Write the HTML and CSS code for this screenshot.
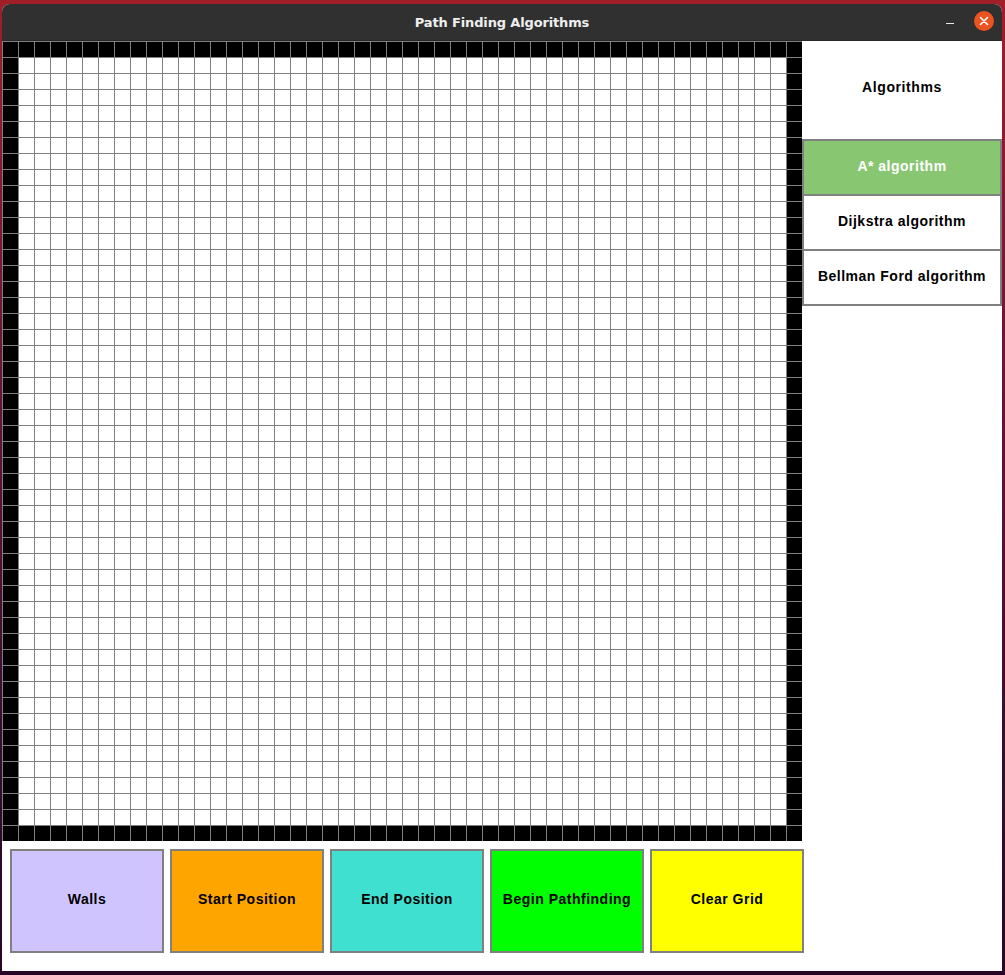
FILE: index.html
```html
<!DOCTYPE html>
<html>
<head>
<meta charset="utf-8">
<title>Path Finding Algorithms</title>
<link rel="stylesheet" href="styles.css">
</head>
<body>
<div class="window">
  <div class="titlebar">
    <span class="title">Path Finding Algorithms</span>
    <div class="controls">
      <span class="minimize"></span>
      <span class="close">
        <svg width="20" height="20" viewBox="0 0 20 20"><circle cx="10" cy="10" r="10" fill="#e95420"/><path d="M6.5 6.5 L13.5 13.5 M13.5 6.5 L6.5 13.5" stroke="#fff" stroke-width="1.6" stroke-linecap="round"/></svg>
      </span>
    </div>
  </div>
  <div class="content">
    <div class="main">
      <div class="board"></div>
      <div class="sidebar">
        <div class="side-label">Algorithms</div>
        <div class="algo algo-active">A* algorithm</div>
        <div class="algo">Dijkstra algorithm</div>
        <div class="algo">Bellman Ford algorithm</div>
      </div>
    </div>
    <div class="toolbar">
      <div class="tool tool-walls">Walls</div>
      <div class="tool tool-start">Start Position</div>
      <div class="tool tool-end">End Position</div>
      <div class="tool tool-begin">Begin Pathfinding</div>
      <div class="tool tool-clear">Clear Grid</div>
    </div>
  </div>
</div>
</body>
</html>
```

FILE: styles.css
```css
html, body {
  margin: 0;
  padding: 0;
}
body {
  width: 1005px;
  height: 975px;
  overflow: hidden;
  background: linear-gradient(180deg, #a01e28 0%, #6e1638 35%, #3a0c30 75%, #2a0626 100%);
  font-family: "Liberation Sans", Arial, sans-serif;
}
.window {
  margin: 4px 0 0 2px;
  width: 1000px;
  height: 967px;
  display: flex;
  flex-direction: column;
  background: #fff;
  border-radius: 8px 8px 0 0;
  overflow: hidden;
}
.titlebar {
  height: 36px;
  flex: none;
  background: #303030;
  border-bottom: 1px solid #262626;
  display: flex;
  align-items: center;
  justify-content: center;
  position: relative;
}
.title {
  color: #eeeeee;
  font-family: "DejaVu Sans", sans-serif;
  font-weight: bold;
  font-size: 13px;
  letter-spacing: -0.15px;
}
.controls {
  position: absolute;
  right: 8px;
  top: 7px;
  display: flex;
  align-items: center;
  gap: 20px;
}
.minimize {
  width: 8px;
  height: 1px;
  background: #e8e8e8;
  margin-top: 4px;
}
.close {
  width: 20px;
  height: 20px;
  display: block;
}
.close svg {
  display: block;
}
.content {
  flex: 1;
  display: flex;
  flex-direction: column;
}
.main {
  display: flex;
}
.board {
  width: 800px;
  height: 800px;
  flex: none;
  background:
    linear-gradient(180deg, #808080 1px, transparent 1px) 0 0 / 16px 16px,
    linear-gradient(90deg, #808080 1px, transparent 1px) 0 0 / 16px 16px,
    linear-gradient(#fff, #fff) 16px 16px / 768px 768px no-repeat,
    #000;
}
.sidebar {
  width: 200px;
  display: flex;
  flex-direction: column;
}
.side-label {
  height: 98px;
  display: flex;
  align-items: center;
  justify-content: center;
  font-weight: bold;
  font-size: 14px;
  letter-spacing: 0.6px;
  color: #000;
  padding-bottom: 6px;
  box-sizing: border-box;
}
.algo {
  height: 57px;
  box-sizing: border-box;
  border: 2px solid #808080;
  display: flex;
  align-items: center;
  justify-content: center;
  font-weight: bold;
  font-size: 14px;
  letter-spacing: 0.5px;
  color: #000;
  background: #fff;
  margin-top: -2px;
  padding-bottom: 3px;
}
.algo-active {
  margin-top: 0;
  background: #89c672;
  color: #fff;
}
.toolbar {
  flex: 1;
  display: flex;
  gap: 6px;
  padding: 8px 0 0 8px;
}
.tool {
  width: 154px;
  height: 104px;
  box-sizing: border-box;
  border: 2px solid #808080;
  display: flex;
  align-items: center;
  justify-content: center;
  font-weight: bold;
  font-size: 14px;
  letter-spacing: 0.5px;
  color: #000;
  padding-bottom: 4px;
}
.tool-walls { background: #d0c4ff; }
.tool-start { background: #ffa500; }
.tool-end { background: #40e0d0; }
.tool-begin { background: #00ff00; }
.tool-clear { background: #ffff00; }
```
